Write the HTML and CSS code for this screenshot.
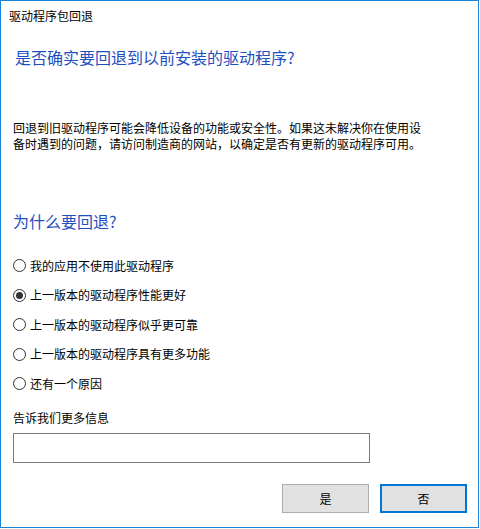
FILE: index.html
```html
<!DOCTYPE html>
<html lang="zh-CN">
<head>
<meta charset="utf-8">
<title>驱动程序包回退</title>
<link rel="stylesheet" href="styles.css">
</head>
<body>
<div class="window">
  <div class="title">驱动程序包回退</div>
  <div class="main-instruction">是否确实要回退到以前安装的驱动程序?</div>
  <p class="desc">回退到旧驱动程序可能会降低设备的功能或安全性。如果这未解决你在使用设备时遇到的问题，请访问制造商的网站，以确定是否有更新的驱动程序可用。</p>
  <div class="section-head">为什么要回退?</div>
  <div class="options">
    <div class="option"><span class="radio"></span><span>我的应用不使用此驱动程序</span></div>
    <div class="option"><span class="radio checked"></span><span>上一版本的驱动程序性能更好</span></div>
    <div class="option"><span class="radio"></span><span>上一版本的驱动程序似乎更可靠</span></div>
    <div class="option"><span class="radio"></span><span>上一版本的驱动程序具有更多功能</span></div>
    <div class="option"><span class="radio"></span><span>还有一个原因</span></div>
  </div>
  <div class="more-label">告诉我们更多信息</div>
  <div class="textbox"></div>
  <div class="buttons">
    <div class="btn">是</div>
    <div class="btn default">否</div>
  </div>
</div>
</body>
</html>
```

FILE: styles.css
```css
* { box-sizing: border-box; }
html, body {
  margin: 0;
  padding: 0;
  background: #ffffff;
}
body {
  font-family: "Noto Sans CJK SC", "Noto Sans", sans-serif;
  font-size: 12px;
  color: #000;
}
.window {
  width: 479px;
  height: 528px;
  border: 1px solid #1883d7;
  background: #fff;
  display: flex;
  flex-direction: column;
}
.title {
  margin-top: 7px;
  padding-left: 8px;
  line-height: 16px;
  height: 16px;
}
.main-instruction {
  margin-top: 22px;
  padding-left: 14px;
  font-size: 16px;
  line-height: 22px;
  height: 22px;
  color: #1f4fbf;
}
.desc {
  margin: 52px 0 0 12px;
  width: 414px;
  line-height: 16px;
}
.section-head {
  margin-top: 58px;
  padding-left: 12px;
  font-size: 16px;
  line-height: 22px;
  height: 22px;
  color: #1f4fbf;
}
.options {
  margin-top: 18.75px;
  padding-left: 12px;
  display: flex;
  flex-direction: column;
}
.option {
  height: 29.5px;
  display: flex;
  align-items: center;
  gap: 4px;
  line-height: 16px;
}
.radio {
  width: 13px;
  height: 13px;
  border: 1px solid #333;
  border-radius: 50%;
  background: #fff;
  display: flex;
  align-items: center;
  justify-content: center;
  flex: none;
}
.radio.checked::after {
  content: "";
  width: 7px;
  height: 7px;
  border-radius: 50%;
  background: #333;
}
.more-label {
  margin-top: 11.75px;
  padding-left: 12px;
  line-height: 16px;
  height: 16px;
}
.textbox {
  margin: 7px 0 0 12px;
  width: 357px;
  height: 30px;
  border: 1px solid #7a7a7a;
  background: #fff;
}
.buttons {
  margin-top: 21px;
  display: flex;
  justify-content: flex-end;
  gap: 11px;
  padding-right: 11px;
}
.btn {
  width: 87px;
  height: 29px;
  background: #e1e1e1;
  border: 1px solid #adadad;
  display: flex;
  align-items: center;
  justify-content: center;
  line-height: 16px;
}
.btn.default {
  border: 2px solid #0078d7;
}
```
